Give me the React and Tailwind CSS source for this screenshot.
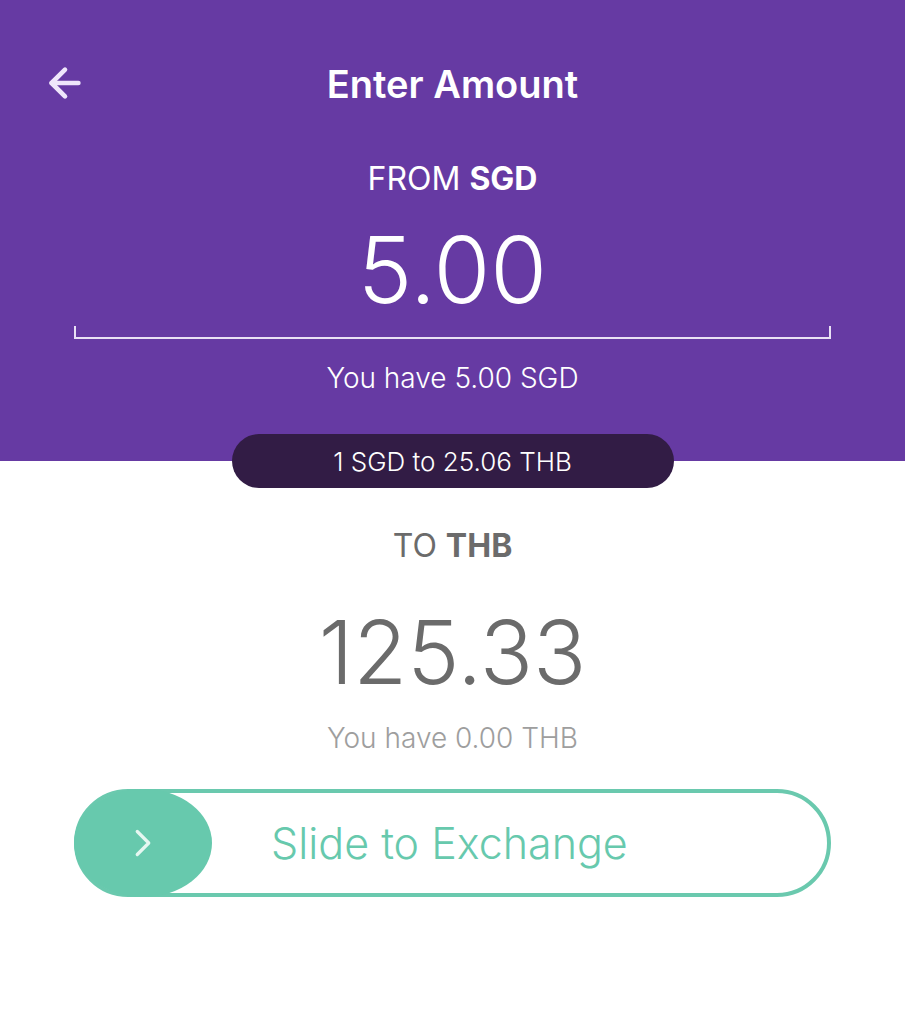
import { ArrowLeft, ChevronRight } from 'lucide-react'

export default function App() {
  return (
    <div className="min-h-screen w-[905px] bg-white font-['Inter',sans-serif]">
      <div className="bg-[#663aa3] h-[461px] flex flex-col items-center">
        <div className="w-full flex items-center relative pt-[58px] h-[110px]">
          <button className="absolute left-[42px] top-[60px] text-[#efe6fb]">
            <ArrowLeft size={46} strokeWidth={2.4} />
          </button>
          <h1 className="w-full text-center text-white text-[38px] font-semibold leading-none">Enter Amount</h1>
        </div>

        <p className="mt-[53px] text-white text-[32px] leading-none">
          FROM <span className="font-bold">SGD</span>
        </p>
        <div className="mt-[29px] text-white text-[92px] font-light leading-none">5.00</div>

        <div className="mt-[10px] w-[757px] h-[13px] border-x-2 border-b-2 border-[#e9e1f5]" />

        <p className="mt-[25px] text-white text-[28px] font-light leading-none">You have 5.00 SGD</p>
      </div>

      <div className="flex flex-col items-center">
        <div className="-mt-[27px] w-[442px] h-[54px] rounded-full bg-[#321c45] flex items-center justify-center text-white text-[26px] font-light">
          1 SGD to 25.06 THB
        </div>

        <p className="mt-[42px] text-[#6b6b6b] text-[32px] leading-none">
          TO <span className="font-bold">THB</span>
        </p>
        <div className="mt-[46px] text-[#6b6b6b] text-[88px] font-light leading-none">125.33</div>
        <p className="mt-[28px] text-[#9e9e9e] text-[28px] font-light leading-none">You have 0.00 THB</p>

        <div className="mt-[37px] w-[757px] h-[108px] rounded-full border-4 border-[#6ac9ae] flex items-center">
          <div className="h-[108px] w-[138px] -ml-[4px] rounded-[50%] bg-[#67c9ad] flex items-center justify-center text-[#e6f7f1]">
            <ChevronRight size={46} strokeWidth={1.7} />
          </div>
          <span className="ml-[59px] text-[#67c9ad] text-[43px] font-light">Slide to Exchange</span>
        </div>
      </div>
    </div>
  )
}
